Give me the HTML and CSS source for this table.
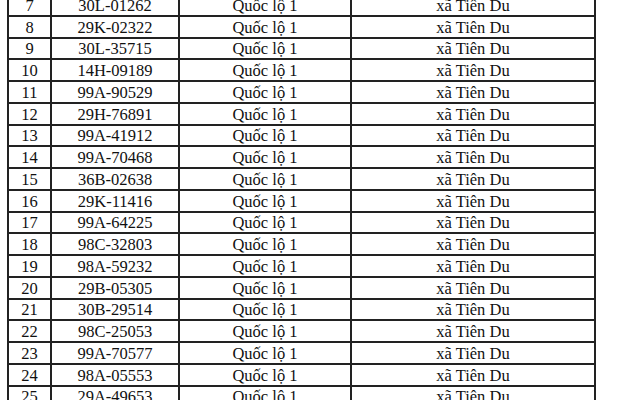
FILE: index.html
```html
<!DOCTYPE html>
<html lang="vi">
<head>
<meta charset="utf-8">
<link rel="stylesheet" href="styles.css">
</head>
<body>
<table class="list">
<colgroup>
<col class="c-stt"><col class="c-plate"><col class="c-road"><col class="c-place">
</colgroup>
<tbody>
<tr><td>7</td><td>30L-01262</td><td>Quốc lộ 1</td><td>xã Tiên Du</td></tr>
<tr><td>8</td><td>29K-02322</td><td>Quốc lộ 1</td><td>xã Tiên Du</td></tr>
<tr><td>9</td><td>30L-35715</td><td>Quốc lộ 1</td><td>xã Tiên Du</td></tr>
<tr><td>10</td><td>14H-09189</td><td>Quốc lộ 1</td><td>xã Tiên Du</td></tr>
<tr><td>11</td><td>99A-90529</td><td>Quốc lộ 1</td><td>xã Tiên Du</td></tr>
<tr><td>12</td><td>29H-76891</td><td>Quốc lộ 1</td><td>xã Tiên Du</td></tr>
<tr><td>13</td><td>99A-41912</td><td>Quốc lộ 1</td><td>xã Tiên Du</td></tr>
<tr><td>14</td><td>99A-70468</td><td>Quốc lộ 1</td><td>xã Tiên Du</td></tr>
<tr><td>15</td><td>36B-02638</td><td>Quốc lộ 1</td><td>xã Tiên Du</td></tr>
<tr><td>16</td><td>29K-11416</td><td>Quốc lộ 1</td><td>xã Tiên Du</td></tr>
<tr><td>17</td><td>99A-64225</td><td>Quốc lộ 1</td><td>xã Tiên Du</td></tr>
<tr><td>18</td><td>98C-32803</td><td>Quốc lộ 1</td><td>xã Tiên Du</td></tr>
<tr><td>19</td><td>98A-59232</td><td>Quốc lộ 1</td><td>xã Tiên Du</td></tr>
<tr><td>20</td><td>29B-05305</td><td>Quốc lộ 1</td><td>xã Tiên Du</td></tr>
<tr><td>21</td><td>30B-29514</td><td>Quốc lộ 1</td><td>xã Tiên Du</td></tr>
<tr><td>22</td><td>98C-25053</td><td>Quốc lộ 1</td><td>xã Tiên Du</td></tr>
<tr><td>23</td><td>99A-70577</td><td>Quốc lộ 1</td><td>xã Tiên Du</td></tr>
<tr><td>24</td><td>98A-05553</td><td>Quốc lộ 1</td><td>xã Tiên Du</td></tr>
<tr><td>25</td><td>29A-49653</td><td>Quốc lộ 1</td><td>xã Tiên Du</td></tr>
</tbody>
</table>
</body>
</html>
```
FILE: styles.css
```css
html, body {
  margin: 0;
  padding: 0;
  background: #fff;
  overflow: hidden;
}
body {
  width: 640px;
  height: 400px;
  font-family: "Liberation Serif", "Times New Roman", serif;
  color: #111;
}
.list {
  border-collapse: collapse;
  table-layout: fixed;
  margin: -7px 0 0 7px;
  font-size: 16.5px;
}
.c-stt { width: 43px; }
.c-plate { width: 128px; }
.c-road { width: 172px; }
.c-place { width: 244px; }
.list tr { height: 21.76px; }
.list td {
  border: 2px solid #222;
  padding: 0;
  text-align: center;
  vertical-align: bottom;
  line-height: 19px;
  white-space: nowrap;
}
```
